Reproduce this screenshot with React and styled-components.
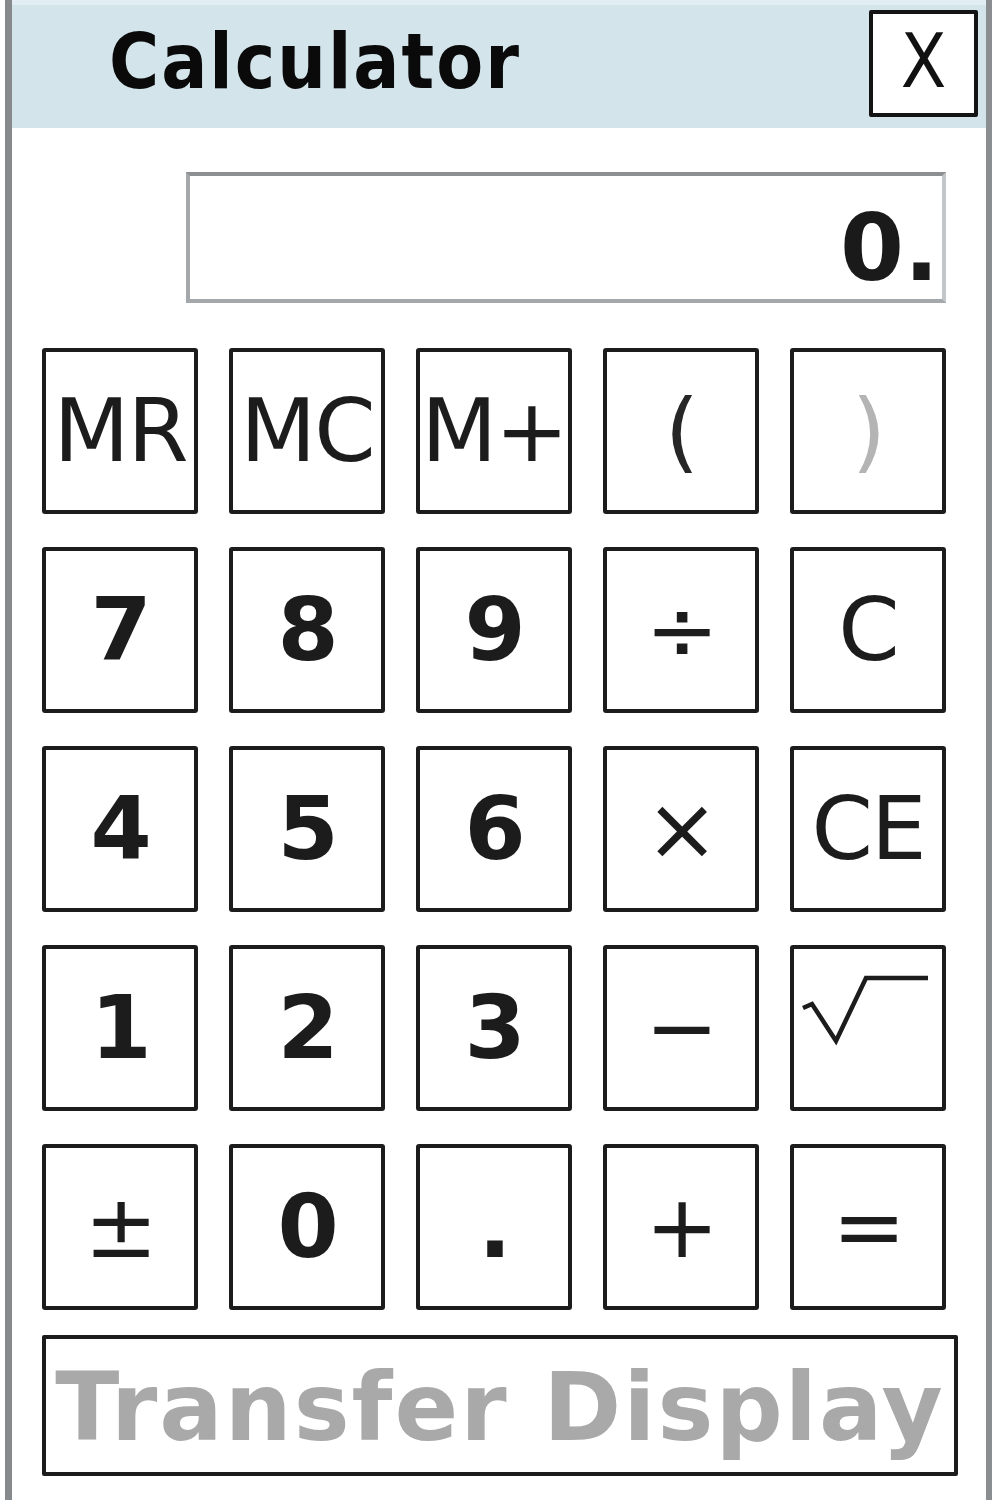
import styled, { createGlobalStyle } from 'styled-components';

const GlobalStyle = createGlobalStyle`
  html, body {
    margin: 0;
    padding: 0;
    background: #ffffff;
  }
`;

const keys = [
  { label: 'MR' },
  { label: 'MC' },
  { label: 'M+' },
  { label: '(', tone: 'dark' },
  { label: ')', tone: 'muted' },
  { label: '7', bold: true },
  { label: '8', bold: true },
  { label: '9', bold: true },
  { label: '÷' },
  { label: 'C' },
  { label: '4', bold: true },
  { label: '5', bold: true },
  { label: '6', bold: true },
  { label: '×' },
  { label: 'CE' },
  { label: '1', bold: true },
  { label: '2', bold: true },
  { label: '3', bold: true },
  { label: '−' },
  { label: 'sqrt', icon: true },
  { label: '±' },
  { label: '0', bold: true },
  { label: '.', bold: true },
  { label: '+' },
  { label: '=' },
];

// square root sign with its bar, drawn to the key's own size
function SqrtIcon() {
  return (
    <svg width="148" height="158" viewBox="4 4 148 158">
      <polyline
        points="13,63 22,59 46,96 76,33 138,33"
        fill="none"
        stroke="#1c1c1c"
        strokeWidth="4.5"
      />
    </svg>
  );
}

function App() {
  return (
    <>
      <GlobalStyle />
      <Window>
        <TitleBar>
          <Title>Calculator</Title>
          <CloseButton>X</CloseButton>
        </TitleBar>

        <Body>
          <DisplayRow>
            <Display>0.</Display>
          </DisplayRow>

          <Keypad>
            {keys.map((k, i) => (
              <Key key={i} $bold={k.bold} $tone={k.tone}>
                {k.icon ? <SqrtIcon /> : k.label}
              </Key>
            ))}
          </Keypad>

          <Transfer>Transfer Display</Transfer>
        </Body>
      </Window>
    </>
  );
}

const Window = styled.div`
  margin-left: 5px;
  width: 987px;
  min-height: 1500px;
  box-sizing: border-box;
  border-left: 7px solid #868a8c;
  border-right: 6px solid #8a8e90;
  background: #ffffff;
  font-family: "DejaVu Sans", Verdana, sans-serif;
`;

const TitleBar = styled.div`
  height: 128px;
  box-sizing: border-box;
  border-top: 5px solid #e2eef3;
  background: #d3e4eb;
  display: flex;
  align-items: flex-start;
  justify-content: space-between;
  padding: 5px 8px 0 97px;
`;

const Title = styled.h1`
  margin: 0;
  padding-top: 14px;
  font-family: "DejaVu Sans Condensed", "DejaVu Sans", sans-serif;
  font-weight: bold;
  font-size: 76px;
  line-height: 76px;
  letter-spacing: 2px;
  color: #0a0a0a;
`;

const CloseButton = styled.div`
  width: 109px;
  height: 107px;
  box-sizing: border-box;
  border: 4px solid #141414;
  border-radius: 2px;
  background: #ffffff;
  display: flex;
  align-items: center;
  justify-content: center;
  font-family: "DejaVu Sans Condensed", "DejaVu Sans", sans-serif;
  font-size: 74px;
  line-height: 1;
  color: #111111;
  padding-bottom: 6px;
`;

const Body = styled.div`
  padding: 44px 0 0 30px;
`;

const DisplayRow = styled.div`
  width: 904px;
  display: flex;
  justify-content: flex-end;
`;

const Display = styled.div`
  width: 760px;
  height: 131px;
  box-sizing: border-box;
  border: 4px solid #a4a8aa;
  border-top-color: #8c9092;
  border-right-color: #c2c6c8;
  display: flex;
  align-items: center;
  justify-content: flex-end;
  padding: 22px 3px 0 0;
  font-weight: bold;
  font-size: 92px;
  color: #1a1a1a;
`;

const Keypad = styled.div`
  margin-top: 45px;
  width: 904px;
  display: grid;
  grid-template-columns: repeat(5, 156px);
  grid-auto-rows: 166px;
  column-gap: 31px;
  row-gap: 33px;
`;

const Key = styled.div`
  box-sizing: border-box;
  border: 4px solid #1c1c1c;
  border-radius: 3px;
  background: #ffffff;
  display: flex;
  align-items: center;
  justify-content: center;
  overflow: hidden;
  font-size: 88px;
  line-height: 1;
  font-weight: ${(p) => (p.$bold ? 'bold' : 'normal')};
  color: ${(p) =>
    p.$tone === 'muted' ? '#b4b4b4' : p.$tone === 'dark' ? '#262626' : '#1c1c1c'};
  letter-spacing: -2px;
  white-space: nowrap;

  svg {
    flex: none;
  }
`;

const Transfer = styled.div`
  margin-top: 25px;
  width: 916px;
  height: 141px;
  box-sizing: border-box;
  border: 4px solid #1c1c1c;
  border-radius: 2px;
  display: flex;
  align-items: center;
  justify-content: center;
  overflow: hidden;
  white-space: nowrap;
  font-weight: bold;
  font-size: 94px;
  line-height: 1;
  letter-spacing: 2px;
  color: #a9a9a9;
  padding-top: 4px;
`;

export default App;
